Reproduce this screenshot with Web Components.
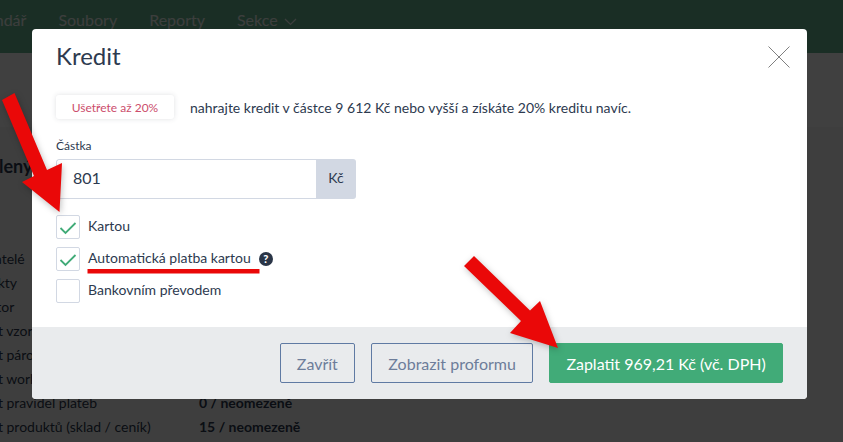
<!DOCTYPE html>
<html lang="cs">
<head>
<meta charset="utf-8">
<title>Kredit</title>
<style>
html, body { margin: 0; height: 100%; overflow: hidden; }
body { font-family: 'Lato', 'Liberation Sans', sans-serif; color: #2d3a4f; background: #f8f8f8; }
</style>
</head>
<body>

<template id="page-template">
<style>
:host { display: block; height: 442px; overflow: hidden; background: #f8f8f8; }
nav { display: flex; align-items: center; gap: 32px; height: 53px; box-sizing: border-box; padding: 0 0 15px 0; margin-left: -36px; background: #69b995; color: #f0f5f2; font-size: 16px; }
nav svg { margin-left: 6px; }
.band { height: 74px; background: #ffffff; }
.content { padding: 25px 0 0 0; margin-left: -32px; }
h2 { margin: 0 0 66px 1px; font-size: 18px; font-weight: 700; line-height: 28px; }
</style>
<nav>
<span>Kalendář</span><span>Soubory</span><span>Reporty</span><span>Sekce<svg width="13" height="8" viewBox="0 0 13 8"><path d="M1 1l5.500 5.500L12 1" fill="none" stroke="currentColor" stroke-width="1.200"/></svg></span>
</nav>
<div class="band"></div>
<div class="content">
<h2>Zvolený</h2>
<slot></slot>
</div>
</template>

<template id="row-template">
<style>
:host { display: grid; grid-template-columns: 231px auto; height: 24px; align-items: center; font-size: 14px; color: #2d3a4f; }
b { font-weight: 700; }
</style>
<span><slot name="label"></slot></span><b><slot name="value"></slot></b>
</template>

<template id="backdrop-template">
<style>
:host { display: block; position: absolute; inset: 0; background: rgba(0,0,0,.75); }
</style>
<slot></slot>
</template>

<template id="modal-template">
<style>
:host { display: flex; flex-direction: column; position: absolute; left: 32px; top: 29px; width: 775px; height: 370px; background: #fff; border-radius: 4px; overflow: hidden; color: #2d3a4f; }
header { display: flex; justify-content: space-between; align-items: center; height: 54px; padding: 0 16px 0 24px; box-sizing: border-box; }
h1 { margin: 0; font-size: 24px; font-weight: 400; line-height: 54px; }
header svg { margin-top: 2px; }
.body { flex: 1; padding: 12px 24px 0; }
footer { display: flex; justify-content: flex-end; gap: 16px; height: 72px; box-sizing: border-box; padding: 16px 24px; background: #e9ebed; }
</style>
<header>
<h1><slot name="title"></slot></h1>
<svg width="24" height="24" viewBox="0 0 24 24"><path d="M1.500 1.500l21 21M22.500 1.500l-21 21" stroke="#808080" stroke-width="1" fill="none"/></svg>
</header>
<div class="body"><slot></slot></div>
<footer><slot name="footer"></slot></footer>
</template>

<template id="promo-template">
<style>
:host { display: flex; align-items: center; gap: 16px; height: 24px; font-size: 14px; }
.badge { display: flex; align-items: center; justify-content: center; width: 118px; height: 24px; border-radius: 3px; background: #fff; box-shadow: 0 0 5px rgba(60,70,90,.16); font-size: 12px; color: #cc4d6c; }
</style>
<span class="badge"><slot name="badge"></slot></span>
<span><slot></slot></span>
</template>

<template id="amount-template">
<style>
:host { display: block; margin-top: 19px; }
label { display: block; font-size: 12px; line-height: 16px; margin-bottom: 5px; }
.group { display: flex; width: 300px; height: 40px; box-sizing: border-box; border-radius: 3px; overflow: hidden; }
.val { flex: 1; box-sizing: border-box; padding-left: 16px; line-height: 36px; font-size: 16px; border: 1px solid #d2d8e3; border-right: 0; border-radius: 3px 0 0 3px; }
.unit { width: 40px; background: #d2d8e3; text-align: center; line-height: 38px; font-size: 14px; }
</style>
<label><slot name="label"></slot></label>
<div class="group"><div class="val"><slot></slot></div><div class="unit"><slot name="unit"></slot></div></div>
</template>

<template id="check-template">
<style>
:host { display: flex; align-items: center; gap: 8px; height: 24px; margin-bottom: 8px; font-size: 14px; line-height: 20px; }
.box { width: 24px; height: 24px; box-sizing: border-box; border: 1px solid #d2d8e3; border-radius: 2px; display: flex; align-items: center; justify-content: center; }
.text { padding-bottom: 2px; }
svg { display: none; margin-top: 2px; }
:host([checked]) svg { display: block; }
</style>
<span class="box"><svg width="18" height="14" viewBox="0 0 18 14"><path d="M1.500 7l5 5L16.500 2" fill="none" stroke="#41ab78" stroke-width="1.800"/></svg></span>
<span class="text"><slot></slot></span><slot name="extra"></slot>
</template>

<template id="help-template">
<style>
:host { display: inline-flex; align-items: center; justify-content: center; width: 14px; height: 14px; border-radius: 50%; background: #2a3547; color: #fff; font-size: 11px; font-weight: 900; line-height: 14px; }
</style>
?
</template>

<template id="button-template">
<style>
:host { display: flex; align-items: center; justify-content: center; height: 40px; box-sizing: border-box; padding: 0 16.250px; border: 1px solid #5f7aa3; border-radius: 2px; font-size: 16px; color: #6d7d9a; }
:host([primary]) { background: #41ab78; border-color: #41ab78; color: #fff; }
</style>
<slot></slot>
</template>

<template id="marks-template">
<style>
:host { display: block; position: absolute; inset: 0; pointer-events: none; }
svg { position: absolute; left: 0; top: 0; }
.arrow { filter: drop-shadow(1px 2px 3px rgba(0,0,0,.25)); }
</style>
<svg width="843" height="442" viewBox="0 0 843 442">
<path class="arrow" fill="#ea0808" d="M2 100L14.500 93L47 170L62 163L59.500 212L22 182L34 176Z"/>
<path class="arrow" fill="#ea0808" d="M464 266L474 256L530 310.500L540 301L558 348L510 333L521 321Z"/>
<rect x="87.500" y="269" width="172" height="4.500" fill="#ea0808"/>
</svg>
</template>

<script>
// each element just clones its own template into an open shadow root
function define(name, templateId) {
  class Comp extends HTMLElement {
    constructor() {
      super();
      const root = this.attachShadow({mode: 'open'});
      root.appendChild(document.querySelector(templateId).content.cloneNode(true));
    }
  }
  customElements.define(name, Comp);
}
define('app-page', '#page-template');
define('limit-row', '#row-template');
define('modal-backdrop', '#backdrop-template');
define('kredit-modal', '#modal-template');
define('promo-line', '#promo-template');
define('amount-field', '#amount-template');
define('check-row', '#check-template');
define('help-dot', '#help-template');
define('app-button', '#button-template');
define('red-marks', '#marks-template');
</script>

<app-page>
<limit-row><span slot="label">Uživatelé</span></limit-row>
<limit-row><span slot="label">Objekty</span></limit-row>
<limit-row><span slot="label">Auditor</span></limit-row>
<limit-row><span slot="label">Počet vzorů</span></limit-row>
<limit-row><span slot="label">Počet párování</span></limit-row>
<limit-row><span slot="label">Počet workflow</span></limit-row>
<limit-row><span slot="label">Počet pravidel plateb</span><span slot="value">0 / neomezeně</span></limit-row>
<limit-row><span slot="label">Počet produktů (sklad / ceník)</span><span slot="value">15 / neomezeně</span></limit-row>
</app-page>

<modal-backdrop>
<kredit-modal>
<span slot="title">Kredit</span>
<promo-line><span slot="badge">Ušetřete až 20%</span>nahrajte kredit v částce 9 612 Kč nebo vyšší a získáte 20% kreditu navíc.</promo-line>
<amount-field><span slot="label">Částka</span>801<span slot="unit">Kč</span></amount-field>
<div style="height:16px"></div>
<check-row checked>Kartou</check-row>
<check-row checked>Automatická platba kartou<help-dot slot="extra"></help-dot></check-row>
<check-row>Bankovním převodem</check-row>
<app-button slot="footer">Zavřít</app-button>
<app-button slot="footer">Zobrazit proformu</app-button>
<app-button slot="footer" primary>Zaplatit 969,21 Kč (vč. DPH)</app-button>
</kredit-modal>
</modal-backdrop>
<red-marks></red-marks>

</body>
</html>
